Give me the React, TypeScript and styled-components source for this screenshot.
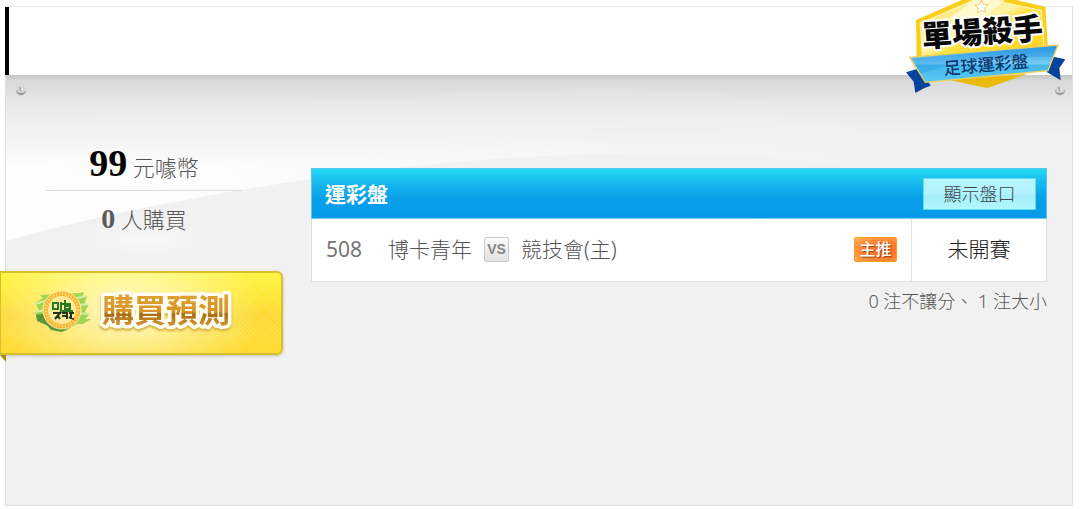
import React from "react";
import styled, { createGlobalStyle } from "styled-components";

const sans = `"Noto Sans", "Noto Sans CJK TC", sans-serif`;

const GlobalStyle = createGlobalStyle`
  *, *::before, *::after { box-sizing: border-box; }
  body {
    margin: 0;
    background: #fff;
    color: #555;
    font-family: ${sans};
    font-weight: 300;
  }
`;

const Page = styled.main`
  position: relative;
  display: flex;
  min-height: 100vh;
  padding: 6px 7px 3px 5px;
  overflow: hidden;
`;

const Panel = styled.article`
  flex: 1;
  display: flex;
  flex-direction: column;
  border: 1px solid #e0e0e0;
  border-top: 2px solid #ebebeb;
`;

const TitleBar = styled.header`
  height: 68px;
  margin-top: -1px;
  margin-left: -1px;
  border-left: 4px solid #000;
  background: #fff;
`;

const Body = styled.div`
  position: relative;
  isolation: isolate;
  flex: 1;
  display: grid;
  grid-template-columns: 277px minmax(0, 1fr);
  column-gap: 28px;
  align-items: start;
  padding: 66px 25px 24px 0;
  background: #f1f1f1;
`;

const Backdrop = styled.svg`
  position: absolute;
  z-index: -1;
  inset: 0 0 auto 0;
  width: 100%;
  height: 190px;
`;

const Screw = styled.svg<{ $side: "left" | "right" }>`
  position: absolute;
  top: 10px;
  ${(p) => p.$side}: ${(p) => (p.$side === "left" ? 9 : 6)}px;
  width: 12px;
  height: 12px;
`;

const Offer = styled.aside`
  display: flex;
  flex-direction: column;
`;

const Stats = styled.div`
  width: 196px;
  margin-left: 40px;
  text-align: center;
`;

const Stat = styled.p<{ $main?: boolean }>`
  margin: 0;
  height: ${(p) => (p.$main ? 50 : 57)}px;
  font-size: 22px;
  line-height: ${(p) => (p.$main ? 52 : 56)}px;
  white-space: nowrap;
  border-bottom: ${(p) => (p.$main ? "1px solid #dcdcdc" : "0")};
`;

const Figure = styled.strong<{ $main?: boolean }>`
  font-family: "Liberation Serif", serif;
  font-weight: 700;
  font-size: ${(p) => (p.$main ? 38 : 28)}px;
  line-height: 1;
  color: ${(p) => (p.$main ? "#000" : "#5c5c5c")};
`;

const BuyButton = styled.button`
  position: relative;
  display: flex;
  align-items: center;
  width: 283px;
  height: 84px;
  margin: 23px 0 0 -6px;
  padding: 0 0 4px 30px;
  border: 2px solid #d8c02c;
  border-left-width: 1px;
  border-radius: 0 6px 6px 0;
  background:
    repeating-linear-gradient(45deg, rgba(255, 255, 255, 0.09) 0 1px, transparent 1px 3px),
    repeating-linear-gradient(-45deg, rgba(255, 255, 255, 0.09) 0 1px, transparent 1px 3px),
    radial-gradient(ellipse 135px 80px at 45% 45%, rgba(255, 255, 225, 0.85), rgba(255, 250, 160, 0) 100%),
    linear-gradient(#fff43c 0%, #ffe42c 35%, #fdd72c 53%, #fddc30 75%, #ffd926 100%);
  box-shadow: 0 1px 3px rgba(90, 80, 30, 0.3);
  cursor: pointer;

  &::after {
    content: "";
    position: absolute;
    top: 82px;
    left: -1px;
    border-top: 7px solid #a48b18;
    border-left: 6px solid transparent;
  }
`;

const Coin = styled.svg`
  width: 62px;
  height: 46px;
`;

const BuyLabel = styled.svg`
  width: 146px;
  height: 52px;
`;

const Market = styled.section`
  margin-top: 27px;
`;

const MarketBar = styled.div`
  display: flex;
  align-items: center;
  justify-content: space-between;
  height: 51px;
  padding: 0 10px 0 13px;
  border: 1px solid #55c6ee;
  border-bottom-color: #7cccf4;
  background: linear-gradient(#23d9f3 0%, #18b8ef 28%, #099fe9 60%, #089aea 100%);
`;

const MarketTitle = styled.h2`
  margin: 0;
  font-size: 21px;
  line-height: 30px;
  font-weight: 700;
  color: #fff;
`;

const OddsButton = styled.button`
  width: 113px;
  height: 32px;
  padding: 0;
  border: 1px solid #5ddfe8;
  background: linear-gradient(#b8f5fe 0%, #b1f2fd 50%, #a5eefa 55%, #b1f6ff 100%);
  font: 300 18px/28px ${sans};
  color: #3c4648;
  cursor: pointer;
`;

const MatchTable = styled.table`
  width: 100%;
  border: 1px solid #dedede;
  border-top: 0;
  border-collapse: separate;
  border-spacing: 0;
  background: #fff;
  font-size: 21px;
  line-height: 30px;

  td {
    height: 62px;
    padding: 0 0 2px;
    vertical-align: middle;
  }
`;

const NumberCell = styled.td`
  width: 76px;
  font-weight: 400;
  color: #777;
  && { padding-left: 14px; }
`;

const Teams = styled.div`
  display: flex;
  align-items: center;
  white-space: nowrap;
`;

const Versus = styled.span`
  width: 25px;
  height: 25px;
  margin: 0 12px;
  border: 1px solid #cacaca;
  border-radius: 2px;
  background: linear-gradient(#fafafa, #e2e2e2);
  font: 700 14px/22px "Liberation Sans", sans-serif;
  text-align: center;
  color: #858585;
`;

const PickCell = styled.td`
  width: 57px;
`;

const PickTag = styled.span`
  display: block;
  width: 43px;
  height: 25px;
  border: 1px solid #fb9a20;
  border-radius: 2px;
  background: radial-gradient(ellipse at 70% 55%, #ff6418, #ff8634 55%, #ffb45c);
  font-size: 16px;
  line-height: 23px;
  font-weight: 500;
  text-align: center;
  color: #fff;
  text-shadow: 1px 1px 1px #8d4318;
`;

const StatusCell = styled.td`
  width: 135px;
  border-left: 1px solid #e2e2e2;
  text-align: center;
  color: #202020;
`;

const Summary = styled.p`
  margin: 5px 0 0;
  font-size: 18px;
  line-height: 28px;
  text-align: right;
`;

const Badge = styled.svg`
  position: absolute;
  top: 0;
  right: 0;
  width: 190px;
  height: 96px;
`;

function ScrewIcon({ side }: { side: "left" | "right" }) {
  return (
    <Screw $side={side} viewBox="0 0 12 12" aria-hidden="true">
      <circle cx="6" cy="6" r="5" fill="#d2d2d2" />
      <path d="M1 5a5 5 0 0 0 10 0c-1 2.500-3 3-5 3S2 7.500 1 5Z" fill="#929292" />
      <path d="M4.500 2 6 6" stroke="#a4a4a4" strokeWidth="1.500" />
      <path d="M7 2.500 7.500 6" stroke="#f2f2f2" strokeWidth="1.500" />
    </Screw>
  );
}

function Waves() {
  return (
    <Backdrop viewBox="0 0 1066 190" preserveAspectRatio="none" aria-hidden="true">
      <defs>
        <linearGradient id="sheen" x1="0" y1="0" x2="1" y2="0">
          <stop offset="0" stopColor="#fefefe" />
          <stop offset="0.5" stopColor="#f9f9f9" />
          <stop offset="0.85" stopColor="#f1f1f1" />
        </linearGradient>
        <linearGradient id="shade" x1="0" y1="0" x2="0" y2="1">
          <stop offset="0" stopColor="#c6c6c6" />
          <stop offset="0.06" stopColor="#d9d9d9" />
          <stop offset="0.3" stopColor="#e8e8e8" />
          <stop offset="0.65" stopColor="#f1f1f1" stopOpacity="0.85" />
          <stop offset="1" stopColor="#f4f4f4" stopOpacity="0" />
        </linearGradient>
        <radialGradient id="glow">
          <stop offset="0" stopColor="#f9f9f9" />
          <stop offset="1" stopColor="#f1f1f1" stopOpacity="0" />
        </radialGradient>
      </defs>
      <path d="M0 0H1066V120C940 110 850 90 770 83C640 72 470 80 305 104C190 121 85 142 0 166Z" fill="url(#sheen)" />
      <ellipse cx="140" cy="165" rx="95" ry="25" fill="url(#glow)" />
      <rect width="1066" height="95" fill="url(#shade)" />
      <path d="M0 45C140 40 330 26 520 15C640 9 760 12 860 60C700 40 420 55 0 110Z" fill="#fff" opacity="0.07" />
    </Backdrop>
  );
}

function CoinIcon() {
  return (
    <Coin viewBox="0 0 62 46" aria-hidden="true">
      <path d="M4 15 12 10 9 7 48 5 53 4 51 10 56 8 53 17 58 16 54 24 59 26 54 31 60 31 52 36 46 36 34 43 22 42 16 38 7 33 10 30 3 25 8 22Z" fill="#9fd552" />
      <path d="M5 27 15 25 48 31 42 38 31 44 20 42 16 37 6 33Z" fill="#5a963a" />
      <path d="M46 10 55 8M48 17 58 16M47 25 58 26M4 16 14 13M4 24 14 22" stroke="#d2f0a4" strokeWidth="2" />
      <circle cx="31" cy="22" r="19" fill="#f9b736" stroke="#fff0a0" />
      <circle cx="31" cy="22" r="16" fill="none" stroke="#ffdf80" strokeWidth="3" strokeDasharray="1 2" />
      <circle cx="31" cy="22" r="14" fill="#ffeb96" />
      <g fill="none" strokeWidth="2">
        <path d="M22 15h5v6h-5zM30 14v8q0 3-2 4M30 16h9v4M34 12v9h6M31 23h11M33 18h5" stroke="#287a24" />
        <path d="M22 25h7l-5 6M27 28l2 3M31 25h5v6M31 28h5M38 25h5M40 24v7M38 29l5 2" stroke="#20331b" />
      </g>
    </Coin>
  );
}

function BuyText() {
  return (
    <BuyLabel viewBox="0 0 146 52">
      <defs>
        <linearGradient id="gold" x1="0" y1="0" x2="0" y2="1">
          <stop offset="0.15" stopColor="#e0a034" />
          <stop offset="0.56" stopColor="#d79427" />
          <stop offset="0.6" stopColor="#a96b10" />
          <stop offset="0.9" stopColor="#d59a3c" />
        </linearGradient>
      </defs>
      <text
        x="9"
        y="37"
        fontFamily={sans}
        fontSize="32"
        fontWeight="700"
        fill="url(#gold)"
        stroke="#fffdf0"
        strokeWidth="7"
        strokeLinejoin="round"
        paintOrder="stroke"
        style={{ filter: "drop-shadow(0 2px 1px #d6ae3b)" }}
      >
        購買預測
      </text>
    </BuyLabel>
  );
}

function KillerBadge() {
  return (
    <Badge viewBox="0 0 570 288" role="img" aria-label="單場殺手 足球運彩盤">
      <defs>
        <linearGradient id="shield" x1="0" y1="0" x2="1" y2="1">
          <stop offset="0" stopColor="#ffe36a" />
          <stop offset="0.45" stopColor="#fff3a8" />
          <stop offset="0.55" stopColor="#ffe03c" />
          <stop offset="1" stopColor="#fbd01c" />
        </linearGradient>
        <linearGradient id="ribbon" x1="0" y1="0" x2="0" y2="1">
          <stop offset="0" stopColor="#2c98e4" />
          <stop offset="0.5" stopColor="#74cdf5" />
          <stop offset="0.55" stopColor="#43b8ee" />
          <stop offset="1" stopColor="#5cc8f4" />
        </linearGradient>
      </defs>
      <path d="M48 217 90 204 122 257 103 264 76 279 71 245Z" fill="#06449c" />
      <path d="M490 170 526 178 508 204 512 241 470 216Z" fill="#06449c" />
      <path d="M78 60 270 -24 466 20 474 145 80 180Z" fill="#f9cf1c" />
      <path d="M91 70 271 -8 454 32 462 145 98 178Z" fill="url(#shield)" stroke="#fff3ac" strokeWidth="4" />
      <path d="M178 55 250 0H345L230 90Z" fill="#fffbe0" opacity="0.8" />
      <path d="M274 0 280 13 294 14 284 24 287 38 275 31 262 39 265 24 255 16 269 13Z" fill="#fff" stroke="#f0b040" strokeWidth="2" />
      <path d="M178 240 292 264 412 222Z" fill="#e9b90b" />
      <path d="M59 172 504 135 474 212 106 247Z" fill="url(#ribbon)" stroke="#f1cf59" strokeWidth="4" />
      <path d="M68 176 498 140 486 170Q250 170 90 220Z" fill="#1686dc" opacity="0.25" />
      <g fontFamily={sans} textAnchor="middle">
        <text
          x="279"
          y="129"
          transform="rotate(-4 279 129)"
          fontSize="91"
          fontWeight="900"
          fill="#080808"
          stroke="#fff"
          strokeWidth="12"
          strokeLinejoin="round"
          paintOrder="stroke"
        >
          單場殺手
        </text>
        <text x="290" y="213" transform="rotate(-5 290 213)" fontSize="51" fontWeight="500" fill="#10386c">
          足球運彩盤
        </text>
      </g>
    </Badge>
  );
}

export default function App() {
  return (
    <>
      <GlobalStyle />
      <Page>
        <Panel>
          <TitleBar />
          <Body>
            <Waves />
            <ScrewIcon side="left" />
            <ScrewIcon side="right" />
            <Offer>
              <Stats>
                <Stat $main>
                  <Figure $main>99</Figure> 元噱幣
                </Stat>
                <Stat>
                  <Figure>0</Figure> 人購買
                </Stat>
              </Stats>
              <BuyButton type="button" aria-label="購買預測">
                <CoinIcon />
                <BuyText />
              </BuyButton>
            </Offer>
            <Market>
              <MarketBar>
                <MarketTitle>運彩盤</MarketTitle>
                <OddsButton type="button">顯示盤口</OddsButton>
              </MarketBar>
              <MatchTable>
                <tbody>
                  <tr>
                    <NumberCell>508</NumberCell>
                    <td>
                      <Teams>
                        博卡青年<Versus>VS</Versus>競技會(主)
                      </Teams>
                    </td>
                    <PickCell>
                      <PickTag>主推</PickTag>
                    </PickCell>
                    <StatusCell>未開賽</StatusCell>
                  </tr>
                </tbody>
              </MatchTable>
              <Summary>0 注不讓分、 1 注大小</Summary>
            </Market>
          </Body>
        </Panel>
        <KillerBadge />
      </Page>
    </>
  );
}
